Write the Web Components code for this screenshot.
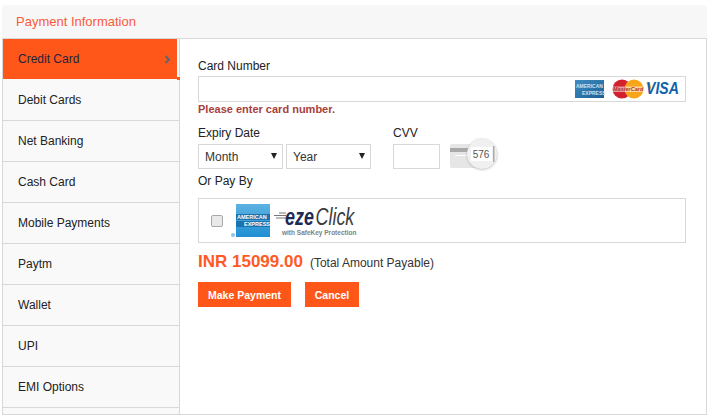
<!DOCTYPE html>
<html>
<head>
<meta charset="utf-8">
<title>Payment Information</title>
<style>
html, body { margin: 0; padding: 0; background: #fff; }
body { font-family: "Liberation Sans", Arial, sans-serif; color: #222; overflow: hidden; height: 418px; }
</style>
</head>
<body>
<payment-panel heading="Payment Information">
    <side-tab active>Credit Card</side-tab>
    <side-tab>Debit Cards</side-tab>
    <side-tab>Net Banking</side-tab>
    <side-tab>Cash Card</side-tab>
    <side-tab>Mobile Payments</side-tab>
    <side-tab>Paytm</side-tab>
    <side-tab>Wallet</side-tab>
    <side-tab>UPI</side-tab>
    <side-tab>EMI Options</side-tab>
    <card-form slot="content"></card-form>
</payment-panel>

<script>
class PaymentPanel extends HTMLElement {
    constructor() {
        super();
        this.attachShadow({ mode: 'open' });
    }

    connectedCallback() {
        this.shadowRoot.innerHTML = `
        <style>
            :host { display: block; margin: 5px 2px 0 2px; }
            .head {
                height: 33px;
                background: #f7f7f7;
                border-radius: 4px 4px 0 0;
                color: #fb5a3a;
                font-size: 13px;
                line-height: 33px;
                padding-left: 14px;
            }
            .body {
                display: flex;
                height: 375px;
                border: 1px solid #d8d8d8;
                overflow: hidden;
            }
            nav {
                width: 176px;
                flex: none;
                background: #f9f9f9;
                border-right: 1px solid #d8d8d8;
            }
            main { flex: 1; }
        </style>
        <div class="head">${this.getAttribute('heading')}</div>
        <div class="body">
            <nav><slot></slot></nav>
            <main><slot name="content"></slot></main>
        </div>
        `;
    }
}
customElements.define('payment-panel', PaymentPanel);

class SideTab extends HTMLElement {
    constructor() {
        super();
        this.attachShadow({ mode: 'open' });
    }

    connectedCallback() {
        this.shadowRoot.innerHTML = `
        <style>
            :host {
                display: flex;
                align-items: center;
                justify-content: space-between;
                box-sizing: border-box;
                height: 41px;
                padding: 0 8px 0 15px;
                border-bottom: 1px solid #d8d8d8;
                font-size: 12px;
                color: #222;
                position: relative;
            }
            :host([active]) {
                background: #ff5719;
                border-bottom: 0;
                height: 40px;
                margin-bottom: 1px;
                margin-right: 2px;
                padding-right: 6px;
                color: #1d2340;
            }
            :host([active])::after {
                content: "";
                position: absolute;
                right: -3px;
                bottom: -1px;
                width: 3px;
                height: 3px;
                background: #ff5719;
            }
            svg { display: none; }
            :host([active]) svg { display: block; }
        </style>
        <span><slot></slot></span>
        <svg width="7" height="9" viewBox="0 0 7 9"><path d="M1.5 1 L5 4.5 L1.5 8" fill="none" stroke="#5f666c" stroke-width="2"/></svg>
        `;
    }
}
customElements.define('side-tab', SideTab);

class CardLogos extends HTMLElement {
    constructor() {
        super();
        this.attachShadow({ mode: 'open' });
    }

    connectedCallback() {
        this.shadowRoot.innerHTML = `
        <style>
            :host { display: flex; align-items: center; }
            svg { display: block; }
            text { font-family: "Liberation Sans", Arial, sans-serif; }
        </style>
        <svg width="107" height="20" viewBox="0 0 107 20">
            <defs>
                <linearGradient id="amex" x1="0" y1="0" x2="1" y2="1">
                    <stop offset="0" stop-color="#3f8cc0"/>
                    <stop offset="1" stop-color="#1c5f96"/>
                </linearGradient>
            </defs>
            <rect x="1" y="1" width="29" height="18" fill="url(#amex)"/>
            <text x="2" y="8.5" font-size="5" font-weight="bold" fill="#cfe0ee">AMERICAN</text>
            <text x="8" y="15.5" font-size="5" font-weight="bold" fill="#cfe0ee">EXPRESS</text>
            <circle cx="48" cy="10" r="9.5" fill="#d3202f"/>
            <circle cx="60" cy="10" r="9.5" fill="#f9a51a"/>
            <rect x="38.5" y="7.5" width="31" height="5.5" fill="#fff" opacity="0.55"/>
            <text x="39" y="12" font-size="5.5" font-style="italic" font-weight="bold" fill="#a33">MasterCard</text>
            <path d="M72 4 h4 l1.5 7 z" fill="#f2ae2c"/>
            <text transform="translate(72 15) scale(0.88 1)" font-size="16" font-style="italic" font-weight="bold" fill="#0f62ad">VISA</text>
        </svg>
        `;
    }
}
customElements.define('card-logos', CardLogos);

class CvvHint extends HTMLElement {
    constructor() {
        super();
        this.attachShadow({ mode: 'open' });
    }

    connectedCallback() {
        this.shadowRoot.innerHTML = `
        <style>
            :host { display: block; width: 48px; height: 32px; }
            svg { display: block; overflow: visible; }
            text { font-family: "Liberation Sans", Arial, sans-serif; }
        </style>
        <svg width="48" height="32" viewBox="0 0 48 32">
            <defs>
                <filter id="lens" x="-30%" y="-30%" width="160%" height="160%">
                    <feDropShadow dx="0" dy="0.5" stdDeviation="1" flood-color="#999" flood-opacity="0.8"/>
                </filter>
            </defs>
            <rect x="0" y="4" width="30" height="24" rx="2" fill="#e6e6e6"/>
            <rect x="0" y="8" width="26" height="4" fill="#a9a9a9"/>
            <rect x="5" y="15" width="14" height="1" fill="#fff"/>
            <circle cx="32" cy="14" r="15" fill="#f0f0f0" filter="url(#lens)"/>
            <rect x="21" y="7" width="21" height="14" fill="#fff"/>
            <rect x="43" y="6" width="1.5" height="16" fill="#aaa"/>
            <text x="31" y="18" font-size="10" text-anchor="middle" fill="#555">576</text>
        </svg>
        `;
    }
}
customElements.define('cvv-hint', CvvHint);

class EzeClick extends HTMLElement {
    constructor() {
        super();
        this.attachShadow({ mode: 'open' });
    }

    connectedCallback() {
        this.shadowRoot.innerHTML = `
        <style>
            :host { display: block; }
            svg { display: block; }
            text { font-family: "Liberation Sans", Arial, sans-serif; }
        </style>
        <svg width="132" height="36" viewBox="0 0 132 36">
            <defs>
                <linearGradient id="blue" x1="0" y1="0" x2="0" y2="1">
                    <stop offset="0" stop-color="#5db2e2"/>
                    <stop offset="1" stop-color="#1f8fd2"/>
                </linearGradient>
            </defs>
            <circle cx="2" cy="32" r="2" fill="#8fc4e8"/>
            <rect x="5" y="1" width="34" height="33" fill="url(#blue)"/>
            <rect x="5" y="11" width="34" height="6" fill="#1b74ad"/>
            <rect x="5" y="18" width="34" height="6" fill="#1b74ad"/>
            <text x="6" y="16" font-size="5.5" font-weight="bold" fill="#fff">AMERICAN</text>
            <text x="13" y="23" font-size="5.5" font-weight="bold" fill="#fff">EXPRESS</text>
            <path d="M43 12.5 h12 M45 15 h10 M48 10 h7" stroke="#777" stroke-width="1" fill="none"/>
            <text transform="translate(54 22) scale(0.78 1)" font-size="23" font-style="italic" font-weight="bold" fill="#1e2a55">eze</text>
            <text transform="translate(84.5 22) scale(0.78 1)" font-size="23" font-style="italic" fill="#3d3d3d">Click</text>
            <text x="51" y="32" font-size="6.5" font-weight="bold" fill="#808080">with SafeKey Protection</text>
        </svg>
        `;
    }
}
customElements.define('eze-click', EzeClick);

class SelectBox extends HTMLElement {
    constructor() {
        super();
        this.attachShadow({ mode: 'open' });
    }

    connectedCallback() {
        this.shadowRoot.innerHTML = `
        <style>
            :host { display: block; position: relative; width: 85px; height: 25px; }
            select {
                appearance: none;
                -webkit-appearance: none;
                box-sizing: border-box;
                width: 100%;
                height: 100%;
                border: 1px solid #d8d8d8;
                border-radius: 0;
                background: #fff;
                color: #333;
                font: 12px "Liberation Sans", Arial, sans-serif;
                padding: 0 0 0 6px;
            }
            i {
                position: absolute;
                right: 6px;
                top: 9px;
                border-left: 3.5px solid transparent;
                border-right: 3.5px solid transparent;
                border-top: 6px solid #222;
            }
        </style>
        <select><option>${this.getAttribute('label')}</option></select>
        <i></i>
        `;
    }
}
customElements.define('select-box', SelectBox);

class CardForm extends HTMLElement {
    constructor() {
        super();
        this.attachShadow({ mode: 'open' });
    }

    connectedCallback() {
        this.shadowRoot.innerHTML = `
        <style>
            :host { display: block; padding: 20px 20px 0 18px; font-size: 12px; color: #222; }
            label { display: block; line-height: 14px; }
            input[type=text] {
                box-sizing: border-box;
                border: 1px solid #d8d8d8;
                background: #fff;
                margin: 0;
                display: block;
            }
            .number { position: relative; margin-top: 3px; height: 26px; }
            .number input { width: 100%; height: 26px; }
            .number card-logos { position: absolute; right: 5px; top: 3px; }
            .error {
                color: #a8403c;
                font-weight: bold;
                font-size: 11px;
                line-height: 13px;
                margin-top: 1px;
            }
            .row { display: flex; margin-top: 10px; }
            .expiry { width: 195px; }
            .pair { display: flex; gap: 3px; margin-top: 4px; }
            .cvv-row { display: flex; align-items: flex-start; gap: 10px; margin-top: 4px; height: 25px; }
            .cvv-row input { width: 47px; height: 25px; }
            .cvv-row cvv-hint { margin-top: -4px; }
            .or { margin-top: 5px; }
            .alt {
                display: flex;
                align-items: center;
                box-sizing: border-box;
                height: 45px;
                margin-top: 10px;
                padding-left: 12px;
                border: 1px solid #d8d8d8;
            }
            .alt input {
                appearance: none;
                -webkit-appearance: none;
                box-sizing: border-box;
                width: 12px;
                height: 12px;
                margin: 0 8px 0 0;
                background: #e9e9e9;
                border: 1px solid #a8a8a8;
                border-radius: 2px;
            }
            .total { display: flex; align-items: baseline; gap: 7px; margin-top: 9px; line-height: 20px; }
            .total b { color: #ff5a26; font-size: 17px; }
            .total span { color: #333; }
            .actions { display: flex; gap: 14px; margin-top: 9px; }
            button {
                height: 25px;
                border: 0;
                padding: 0;
                background: #ff5719;
                color: #fff;
                font: bold 10.5px "Liberation Sans", Arial, sans-serif;
            }
            .pay { width: 93px; }
            .cancel { width: 54px; }
        </style>
        <label>Card Number</label>
        <div class="number">
            <input type="text">
            <card-logos></card-logos>
        </div>
        <div class="error">Please enter card number.</div>
        <div class="row">
            <div class="expiry">
                <label>Expiry Date</label>
                <div class="pair">
                    <select-box label="Month"></select-box>
                    <select-box label="Year"></select-box>
                </div>
            </div>
            <div>
                <label>CVV</label>
                <div class="cvv-row">
                    <input type="text">
                    <cvv-hint></cvv-hint>
                </div>
            </div>
        </div>
        <label class="or">Or Pay By</label>
        <div class="alt">
            <input type="checkbox">
            <eze-click></eze-click>
        </div>
        <div class="total"><b>INR 15099.00</b><span>(Total Amount Payable)</span></div>
        <div class="actions">
            <button class="pay">Make Payment</button>
            <button class="cancel">Cancel</button>
        </div>
        `;
    }
}
customElements.define('card-form', CardForm);
</script>
</body>
</html>
